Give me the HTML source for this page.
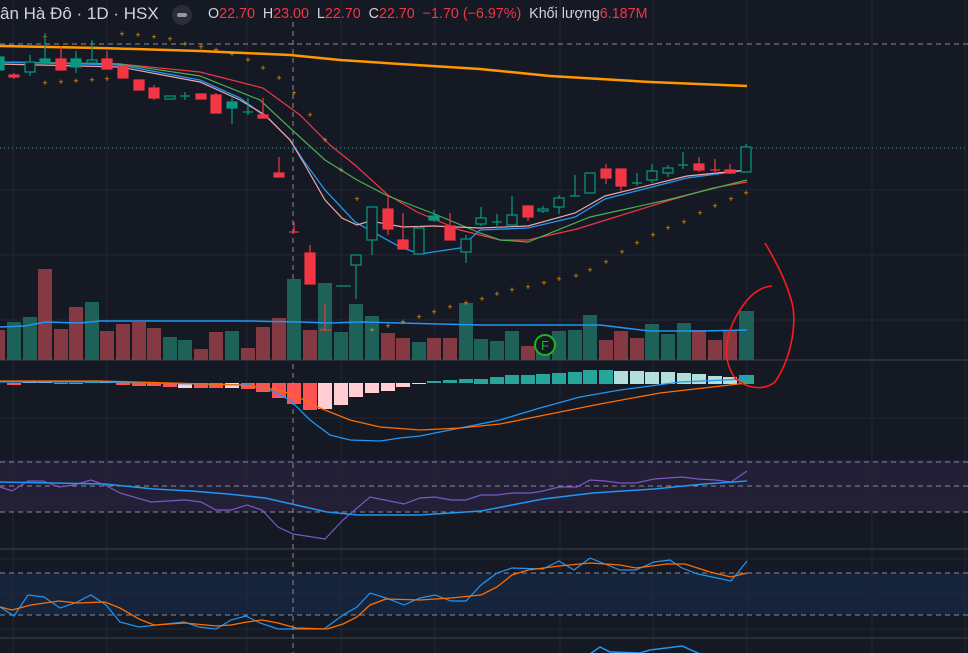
<!DOCTYPE html>
<html><head><meta charset="utf-8"><style>
html,body{margin:0;padding:0;background:#151924;width:968px;height:653px;overflow:hidden;font-family:"Liberation Sans",sans-serif}
svg{position:absolute;left:0;top:0}
.hdr{position:absolute;top:4px;left:0;color:#d1d4dc;white-space:nowrap}
.t{font-size:17px}
.o{position:absolute;left:208px;top:6px;font-size:14.3px;color:#d1d4dc;white-space:nowrap}
.r{color:#f23645}
.btn{position:absolute;left:172px;top:5px;width:20px;height:20px;border-radius:50%;background:#2a2e39}
.btn:after{content:"";position:absolute;left:5px;top:8px;width:10px;height:4px;border-radius:2px;background:#9598a1}
</style></head><body>
<svg width="968" height="653" viewBox="0 0 968 653">
<rect x="0" y="460" width="968" height="52" fill="#221f36"/>
<rect x="0" y="573" width="968" height="42" fill="#15243a"/>
<g stroke="#232735" stroke-width="1">
<line x1="13" y1="0" x2="13" y2="653"/><line x1="107" y1="0" x2="107" y2="653"/><line x1="247" y1="0" x2="247" y2="653"/><line x1="341" y1="0" x2="341" y2="653"/><line x1="435" y1="0" x2="435" y2="653"/><line x1="560" y1="0" x2="560" y2="653"/><line x1="653" y1="0" x2="653" y2="653"/><line x1="747" y1="0" x2="747" y2="653"/><line x1="872" y1="0" x2="872" y2="653"/><line x1="965" y1="0" x2="965" y2="653"/>
<line x1="0" y1="190" x2="968" y2="190"/><line x1="0" y1="255" x2="968" y2="255"/><line x1="0" y1="320" x2="968" y2="320"/><line x1="0" y1="418" x2="968" y2="418"/><line x1="0" y1="499" x2="968" y2="499"/><line x1="0" y1="559" x2="968" y2="559"/><line x1="0" y1="594" x2="968" y2="594"/><line x1="0" y1="629" x2="968" y2="629"/>
</g>
<g stroke="#2a2e39" stroke-width="2"><line x1="0" y1="360" x2="968" y2="360"/><line x1="0" y1="549" x2="968" y2="549"/><line x1="0" y1="638" x2="968" y2="638"/></g>
<g stroke="#8a8d96" stroke-width="1" stroke-dasharray="5,4">
<line x1="0" y1="44" x2="968" y2="44"/><line x1="0" y1="462" x2="968" y2="462"/><line x1="0" y1="486" x2="968" y2="486"/><line x1="0" y1="512" x2="968" y2="512"/><line x1="0" y1="573" x2="968" y2="573"/><line x1="0" y1="615" x2="968" y2="615"/>
<line x1="293" y1="22" x2="293" y2="653"/>
</g>
<line x1="0" y1="148" x2="968" y2="148" stroke="#26a69a" stroke-dasharray="1,3"/>
<g>
<rect x="-8" y="330" width="13" height="30" fill="#843943"/>
<rect x="7" y="322" width="14" height="38" fill="#1e6158"/><rect x="23" y="317" width="14" height="43" fill="#1e6158"/><rect x="38" y="269" width="14" height="91" fill="#843943"/><rect x="54" y="329" width="14" height="31" fill="#843943"/><rect x="69" y="307" width="14" height="53" fill="#843943"/><rect x="85" y="302" width="14" height="58" fill="#1e6158"/><rect x="100" y="331" width="14" height="29" fill="#843943"/><rect x="116" y="324" width="14" height="36" fill="#843943"/><rect x="132" y="322" width="14" height="38" fill="#843943"/><rect x="147" y="328" width="14" height="32" fill="#843943"/><rect x="163" y="337" width="14" height="23" fill="#1e6158"/><rect x="178" y="340" width="14" height="20" fill="#1e6158"/><rect x="194" y="349" width="14" height="11" fill="#843943"/><rect x="209" y="332" width="14" height="28" fill="#843943"/><rect x="225" y="331" width="14" height="29" fill="#1e6158"/><rect x="241" y="348" width="14" height="12" fill="#843943"/><rect x="256" y="327" width="14" height="33" fill="#843943"/><rect x="272" y="318" width="14" height="42" fill="#843943"/><rect x="287" y="279" width="14" height="81" fill="#1e6158"/><rect x="303" y="330" width="14" height="30" fill="#843943"/><rect x="318" y="283" width="14" height="77" fill="#1e6158"/><rect x="334" y="332" width="14" height="28" fill="#1e6158"/><rect x="349" y="304" width="14" height="56" fill="#1e6158"/><rect x="365" y="316" width="14" height="44" fill="#1e6158"/><rect x="381" y="333" width="14" height="27" fill="#843943"/><rect x="396" y="338" width="14" height="22" fill="#843943"/><rect x="412" y="342" width="14" height="18" fill="#1e6158"/><rect x="427" y="338" width="14" height="22" fill="#843943"/><rect x="443" y="338" width="14" height="22" fill="#843943"/><rect x="459" y="303" width="14" height="57" fill="#1e6158"/><rect x="474" y="339" width="14" height="21" fill="#1e6158"/><rect x="490" y="341" width="14" height="19" fill="#1e6158"/><rect x="505" y="331" width="14" height="29" fill="#1e6158"/><rect x="521" y="346" width="14" height="14" fill="#843943"/><rect x="536" y="345" width="14" height="15" fill="#1e6158"/><rect x="552" y="331" width="14" height="29" fill="#1e6158"/><rect x="568" y="330" width="14" height="30" fill="#1e6158"/><rect x="583" y="315" width="14" height="45" fill="#1e6158"/><rect x="599" y="340" width="14" height="20" fill="#843943"/><rect x="614" y="331" width="14" height="29" fill="#843943"/><rect x="630" y="338" width="14" height="22" fill="#843943"/><rect x="645" y="324" width="14" height="36" fill="#1e6158"/><rect x="661" y="334" width="14" height="26" fill="#1e6158"/><rect x="677" y="323" width="14" height="37" fill="#1e6158"/><rect x="692" y="330" width="14" height="30" fill="#843943"/><rect x="708" y="340" width="14" height="20" fill="#843943"/><rect x="723" y="330" width="14" height="30" fill="#843943"/><rect x="739" y="311" width="15" height="49" fill="#1e6158"/>
</g>
<polyline fill="none" stroke="#2196f3" stroke-width="1.5" points="0,327 25,326 45,322 80,323 100,321 150,321 200,321 250,321 300,322 330,323 360,322 400,323 440,324 480,325 540,325 600,325 650,331 700,331 747,330"/>
<g>
<rect x="7" y="383" width="14" height="2" fill="#ff5252"/><rect x="23" y="382" width="14" height="1" fill="#ffcdd2"/><rect x="38" y="382" width="14" height="1" fill="#ffcdd2"/><rect x="54" y="383" width="14" height="1" fill="#ff5252"/><rect x="69" y="383" width="14" height="1" fill="#ff5252"/><rect x="85" y="382" width="14" height="1" fill="#26a69a"/><rect x="100" y="382" width="14" height="1" fill="#ffcdd2"/><rect x="116" y="383" width="14" height="2" fill="#ff5252"/><rect x="132" y="383" width="14" height="3" fill="#ff5252"/><rect x="147" y="383" width="14" height="3" fill="#ff5252"/><rect x="163" y="383" width="14" height="4" fill="#ff5252"/><rect x="178" y="383" width="14" height="5" fill="#ffcdd2"/><rect x="194" y="383" width="14" height="5" fill="#ff5252"/><rect x="209" y="383" width="14" height="5" fill="#ff5252"/><rect x="225" y="383" width="14" height="5" fill="#ffcdd2"/><rect x="241" y="383" width="14" height="6" fill="#ff5252"/><rect x="256" y="383" width="14" height="9" fill="#ff5252"/><rect x="272" y="383" width="14" height="15" fill="#ff5252"/><rect x="287" y="383" width="14" height="21" fill="#ff5252"/><rect x="303" y="383" width="14" height="27" fill="#ff5252"/><rect x="318" y="383" width="14" height="26" fill="#ffcdd2"/><rect x="334" y="383" width="14" height="22" fill="#ffcdd2"/><rect x="349" y="383" width="14" height="14" fill="#ffcdd2"/><rect x="365" y="383" width="14" height="10" fill="#ffcdd2"/><rect x="381" y="383" width="14" height="8" fill="#ffcdd2"/><rect x="396" y="383" width="14" height="4" fill="#ffcdd2"/><rect x="412" y="383" width="14" height="1" fill="#ffcdd2"/>
<rect x="427" y="381" width="14" height="2" fill="#26a69a"/><rect x="443" y="380" width="14" height="3" fill="#26a69a"/><rect x="459" y="379" width="14" height="4" fill="#26a69a"/><rect x="474" y="379" width="14" height="5" fill="#26a69a"/><rect x="490" y="377" width="14" height="7" fill="#26a69a"/><rect x="505" y="375" width="14" height="9" fill="#26a69a"/><rect x="521" y="375" width="14" height="9" fill="#26a69a"/><rect x="536" y="374" width="14" height="10" fill="#26a69a"/><rect x="552" y="373" width="14" height="11" fill="#26a69a"/><rect x="568" y="372" width="14" height="12" fill="#26a69a"/><rect x="583" y="370" width="14" height="14" fill="#26a69a"/><rect x="599" y="370" width="14" height="14" fill="#26a69a"/><rect x="614" y="371" width="14" height="13" fill="#b2dfdb"/><rect x="630" y="371" width="14" height="13" fill="#b2dfdb"/><rect x="645" y="372" width="14" height="12" fill="#b2dfdb"/><rect x="661" y="372" width="14" height="12" fill="#b2dfdb"/><rect x="677" y="373" width="14" height="11" fill="#b2dfdb"/><rect x="692" y="374" width="14" height="10" fill="#b2dfdb"/><rect x="708" y="376" width="14" height="8" fill="#b2dfdb"/><rect x="723" y="377" width="14" height="7" fill="#b2dfdb"/><rect x="739" y="375" width="15" height="9" fill="#26a69a"/>
</g>
<polyline fill="none" stroke="#2196f3" stroke-width="1.3" points="0,382 100,382 250,385 270,390 290,400 310,420 330,435 350,440 380,441 400,438 420,436 460,428 500,420 540,408 580,397 620,390 680,382 747,379"/>
<polyline fill="none" stroke="#ff6d00" stroke-width="1.3" points="0,381 100,381 240,385 280,390 300,398 320,408 350,420 380,427 420,430 460,428 500,424 540,416 600,404 660,393 747,383"/>
<polyline fill="none" stroke="#7e57c2" stroke-width="1.2" points="0,487 12,491 28,481 43,481 59,487 74,485 91,480 105,485 120,493 151,502 185,500 201,502 216,510 231,510 247,505 262,510 278,527 293,534 325,539 343,520 370,497 404,504 420,498 435,497 451,500 466,500 481,495 497,495 512,493 531,493 543,491 559,487 577,487 590,480 605,481 620,483 636,483 654,479 682,477 698,479 716,480 731,482 747,471"/>
<polyline fill="none" stroke="#2196f3" stroke-width="1.5" points="0,482 105,484 154,489 191,491 228,494 265,498 296,505 327,512 358,515 420,515 481,511 543,499 593,493 654,489 704,484 747,481"/>
<polyline fill="none" stroke="#2196f3" stroke-width="1.2" points="0,607 14,616 28,595 44,597 60,608 75,603 91,595 106,605 120,622 139,627 184,622 199,627 216,629 231,620 246,616 260,623 278,629 324,629 343,615 357,607 370,593 386,598 404,605 420,598 435,595 451,601 466,601 481,585 497,573 512,568 543,569 559,561 574,570 590,558 605,564 620,570 636,570 654,562 670,560 682,568 698,574 731,581 747,561"/>
<polyline fill="none" stroke="#ff6d00" stroke-width="1.3" points="0,607 12,610 31,605 59,601 77,603 105,602 120,608 139,619 154,625 185,623 216,626 231,625 247,622 262,620 278,623 296,628 327,629 343,624 357,617 370,605 386,599 420,600 451,598 481,595 497,587 512,575 528,570 559,566 590,563 620,565 636,568 667,564 685,564 710,572 731,577 747,573"/>
<polyline fill="none" stroke="#2196f3" stroke-width="1.5" points="590,654 600,647 610,652 640,653 650,650 682,646 700,654"/>
<polyline fill="none" stroke="#ff9800" stroke-width="2.5" points="0,46 100,48 200,51 290,55 340,60 400,64 480,69 550,76 650,82 747,86"/>
<polyline fill="none" stroke="#f23645" stroke-width="1.2" points="0,62 120,64 200,72 263,88 300,115 330,145 355,165 388,195 417,212 460,230 500,240 528,240 577,229 667,201 713,188 747,182"/>
<polyline fill="none" stroke="#4caf50" stroke-width="1.2" points="0,62 120,64 200,76 260,100 290,128 325,160 357,180 388,196 437,215 480,233 500,240 528,242 590,217 667,200 747,180"/>
<polyline fill="none" stroke="#2196f3" stroke-width="1.3" points="0,62 120,65 200,80 240,98 270,120 290,140 303,160 325,190 355,222 400,247 420,254 460,248 480,230 528,228 575,217 605,199 687,178 747,170"/>
<polyline fill="none" stroke="#f4a6a6" stroke-width="1.2" points="0,64 120,67 200,82 240,100 265,115 290,140 305,165 325,200 342,218 357,225 370,221 403,227 433,226 480,228 528,226 575,213 605,196 687,176 747,170"/>
<g fill="#ff9800" font-size="9" font-family="Liberation Sans" text-anchor="middle">
<text x="45" y="40">+</text><text x="45" y="86">+</text><text x="61" y="85">+</text><text x="76" y="84">+</text><text x="92" y="83">+</text><text x="107" y="82">+</text>
<text x="122" y="37">+</text><text x="138" y="38">+</text><text x="154" y="40">+</text><text x="170" y="42">+</text><text x="185" y="47">+</text><text x="201" y="50">+</text><text x="216" y="53">+</text><text x="232" y="57">+</text><text x="248" y="63">+</text><text x="263" y="71">+</text><text x="279" y="81">+</text><text x="294" y="96">+</text><text x="310" y="118">+</text><text x="325" y="143">+</text><text x="341" y="173">+</text><text x="357" y="202">+</text>
<text x="372" y="333">+</text><text x="388" y="329">+</text><text x="403" y="325">+</text><text x="419" y="320">+</text><text x="434" y="315">+</text><text x="450" y="310">+</text><text x="466" y="306">+</text><text x="482" y="302">+</text><text x="497" y="297">+</text><text x="512" y="293">+</text><text x="528" y="290">+</text><text x="544" y="286">+</text><text x="559" y="282">+</text><text x="576" y="279">+</text><text x="590" y="273">+</text><text x="606" y="265">+</text><text x="622" y="255">+</text><text x="637" y="246">+</text><text x="653" y="238">+</text><text x="668" y="231">+</text><text x="684" y="225">+</text><text x="700" y="216">+</text><text x="715" y="209">+</text><text x="731" y="202">+</text><text x="746" y="196">+</text>
</g>
<g stroke-width="1.2">
<g stroke="#f23645" fill="#f23645">
<line x1="14" y1="73" x2="14" y2="79"/><rect x="9" y="75" width="10" height="2"/>
<line x1="61" y1="46" x2="61" y2="70"/><rect x="56" y="59" width="10" height="11"/>
<line x1="107" y1="51" x2="107" y2="69"/><rect x="102" y="59" width="10" height="10"/>
<rect x="118" y="66" width="10" height="12"/><rect x="134" y="80" width="10" height="10"/>
<line x1="154" y1="85" x2="154" y2="100"/><rect x="149" y="88" width="10" height="10"/>
<rect x="196" y="94" width="10" height="5"/>
<line x1="216" y1="93" x2="216" y2="113"/><rect x="211" y="95" width="10" height="18"/>
<line x1="263" y1="98" x2="263" y2="118"/><rect x="258" y="115" width="10" height="3"/>
<line x1="279" y1="157" x2="279" y2="177"/><rect x="274" y="173" width="10" height="4"/>
<line x1="294" y1="222" x2="294" y2="233"/><line x1="289" y1="232" x2="299" y2="232"/>
<line x1="310" y1="245" x2="310" y2="284"/><rect x="305" y="253" width="10" height="31"/>
<line x1="325" y1="304" x2="325" y2="330"/><line x1="320" y1="330" x2="331" y2="330"/>
<line x1="388" y1="195" x2="388" y2="235"/><rect x="383" y="209" width="10" height="20"/>
<line x1="403" y1="213" x2="403" y2="249"/><rect x="398" y="240" width="10" height="9"/>
<line x1="450" y1="213" x2="450" y2="240"/><rect x="445" y="226" width="10" height="14"/>
<line x1="528" y1="206" x2="528" y2="221"/><rect x="523" y="206" width="10" height="11"/>
<line x1="606" y1="164" x2="606" y2="184"/><rect x="601" y="169" width="10" height="9"/>
<line x1="621" y1="169" x2="621" y2="191"/><rect x="616" y="169" width="10" height="17"/>
<line x1="699" y1="157" x2="699" y2="172"/><rect x="694" y="164" width="10" height="6"/>
<line x1="715" y1="159" x2="715" y2="174"/><line x1="710" y1="170" x2="720" y2="170"/>
<line x1="730" y1="164" x2="730" y2="174"/><rect x="725" y="170" width="10" height="3"/>
</g>
<g stroke="#089981" fill="none">
<rect x="-6" y="57" width="10" height="13" fill="#089981"/>
<line x1="30" y1="55" x2="30" y2="76"/><rect x="25" y="62" width="10" height="10" fill="#151924"/>
<line x1="45" y1="33" x2="45" y2="65"/><rect x="40" y="59" width="10" height="4" fill="#089981"/>
<line x1="76" y1="51" x2="76" y2="73"/><rect x="71" y="59" width="10" height="8" fill="#089981"/>
<line x1="92" y1="40" x2="92" y2="63"/><rect x="87" y="60" width="10" height="3" fill="#151924"/>
<rect x="165" y="96" width="10" height="3" fill="#151924"/>
<line x1="185" y1="92" x2="185" y2="100"/><line x1="180" y1="96" x2="190" y2="96"/>
<line x1="232" y1="98" x2="232" y2="124"/><rect x="227" y="102" width="10" height="6" fill="#089981"/>
<line x1="248" y1="98" x2="248" y2="115"/><line x1="243" y1="112" x2="253" y2="112"/>
<line x1="336" y1="286" x2="351" y2="286"/>
<line x1="356" y1="265" x2="356" y2="299"/><rect x="351" y="255" width="10" height="10" fill="#151924"/>
<line x1="372" y1="240" x2="372" y2="255"/><rect x="367" y="207" width="10" height="33" fill="#151924"/>
<line x1="419" y1="226" x2="419" y2="254"/><rect x="414" y="228" width="10" height="26" fill="#151924"/>
<line x1="434" y1="210" x2="434" y2="222"/><rect x="429" y="216" width="10" height="4" fill="#089981"/>
<line x1="466" y1="235" x2="466" y2="263"/><rect x="461" y="239" width="10" height="13" fill="#151924"/>
<line x1="481" y1="207" x2="481" y2="226"/><rect x="476" y="218" width="10" height="6" fill="#151924"/>
<line x1="497" y1="214" x2="497" y2="230"/><line x1="492" y1="222" x2="502" y2="222"/>
<line x1="512" y1="196" x2="512" y2="225"/><rect x="507" y="215" width="10" height="10" fill="#151924"/>
<line x1="543" y1="206" x2="543" y2="213"/><rect x="538" y="209" width="10" height="2" fill="#151924"/>
<line x1="559" y1="195" x2="559" y2="214"/><rect x="554" y="198" width="10" height="9" fill="#151924"/>
<line x1="575" y1="175" x2="575" y2="196"/><line x1="570" y1="196" x2="580" y2="196"/>
<rect x="585" y="173" width="10" height="20" fill="#151924"/>
<line x1="637" y1="173" x2="637" y2="186"/><line x1="632" y1="183" x2="642" y2="183"/>
<line x1="652" y1="164" x2="652" y2="183"/><rect x="647" y="171" width="10" height="9" fill="#151924"/>
<line x1="668" y1="165" x2="668" y2="177"/><rect x="663" y="168" width="10" height="5" fill="#151924"/>
<line x1="683" y1="152" x2="683" y2="169"/><line x1="678" y1="165" x2="688" y2="165"/>
<line x1="746" y1="144" x2="746" y2="147"/><rect x="741" y="147" width="10" height="25" fill="#151924"/>
</g>
</g>
<circle cx="545" cy="345" r="10" fill="#151924" stroke="#1fb51f" stroke-width="2"/>
<text x="545" y="350" fill="#1fb51f" font-size="13" font-family="Liberation Sans" text-anchor="middle">F</text>
<path d="M765,243 C778,265 788,285 793,307 C796,330 790,360 775,382 C765,390 748,390 735,378 C722,360 724,335 740,310 C748,297 758,287 772,286" fill="none" stroke="#ff1a1a" stroke-width="1.6"/>
</svg>
<div class="hdr t">ân Hà Đô · 1D · HSX</div>
<div class="btn"></div>
<div class="o">O<span class="r">22.70</span>&nbsp; H<span class="r">23.00</span>&nbsp; L<span class="r">22.70</span>&nbsp; C<span class="r">22.70</span>&nbsp; <span class="r">−1.70 (−6.97%)</span>&nbsp; Khối lượng<span class="r">6.187M</span></div>
</body></html>
